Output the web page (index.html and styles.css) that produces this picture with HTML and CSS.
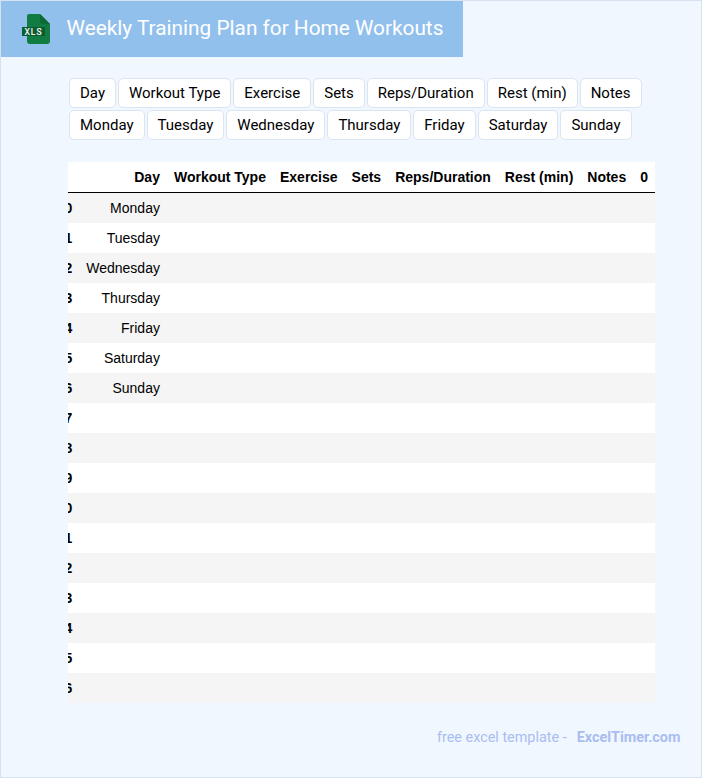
FILE: index.html
```html
<!DOCTYPE html>
<html lang="en">
<head>
<meta charset="utf-8">
<title>Weekly Training Plan for Home Workouts</title>
<link rel="stylesheet" href="styles.css">
</head>
<body>
<div class="page">
  <header class="banner">
    <svg class="logo" width="30" height="30" viewBox="0 0 30 30" aria-hidden="true">
      <path d="M5 2a2 2 0 0 1 2-2H18L28 10V27a3 3 0 0 1-3 3H8a3 3 0 0 1-3-3Z" fill="#107c41"/>
      <path d="M18 0L28 10H21a3 3 0 0 1-3-3Z" fill="#0c6a37"/>
      <rect x="0" y="13" width="23" height="9" fill="#0b5c30"/>
      <text x="11.5" y="20.5" text-anchor="middle" class="logo-text">XLS</text>
    </svg>
    <h1 class="title">Weekly Training Plan for Home Workouts</h1>
  </header>
  <main class="content">
    <div class="chips">
      <span class="chip">Day</span><span class="chip">Workout Type</span><span class="chip">Exercise</span><span class="chip">Sets</span><span class="chip">Reps/Duration</span><span class="chip">Rest (min)</span><span class="chip">Notes</span>
    </div>
    <div class="chips">
      <span class="chip">Monday</span><span class="chip">Tuesday</span><span class="chip">Wednesday</span><span class="chip">Thursday</span><span class="chip">Friday</span><span class="chip">Saturday</span><span class="chip">Sunday</span>
    </div>
    <div class="table-wrap">
      <table class="sheet">
        <thead>
          <tr><th></th><th>Day</th><th>Workout Type</th><th>Exercise</th><th>Sets</th><th>Reps/Duration</th><th>Rest (min)</th><th>Notes</th><th>0</th></tr>
        </thead>
        <tbody>
          <tr><th>0</th><td>Monday</td><td></td><td></td><td></td><td></td><td></td><td></td><td></td></tr>
          <tr><th>1</th><td>Tuesday</td><td></td><td></td><td></td><td></td><td></td><td></td><td></td></tr>
          <tr><th>2</th><td>Wednesday</td><td></td><td></td><td></td><td></td><td></td><td></td><td></td></tr>
          <tr><th>3</th><td>Thursday</td><td></td><td></td><td></td><td></td><td></td><td></td><td></td></tr>
          <tr><th>4</th><td>Friday</td><td></td><td></td><td></td><td></td><td></td><td></td><td></td></tr>
          <tr><th>5</th><td>Saturday</td><td></td><td></td><td></td><td></td><td></td><td></td><td></td></tr>
          <tr><th>6</th><td>Sunday</td><td></td><td></td><td></td><td></td><td></td><td></td><td></td></tr>
          <tr><th>7</th><td></td><td></td><td></td><td></td><td></td><td></td><td></td><td></td></tr>
          <tr><th>8</th><td></td><td></td><td></td><td></td><td></td><td></td><td></td><td></td></tr>
          <tr><th>9</th><td></td><td></td><td></td><td></td><td></td><td></td><td></td><td></td></tr>
          <tr><th>10</th><td></td><td></td><td></td><td></td><td></td><td></td><td></td><td></td></tr>
          <tr><th>11</th><td></td><td></td><td></td><td></td><td></td><td></td><td></td><td></td></tr>
          <tr><th>12</th><td></td><td></td><td></td><td></td><td></td><td></td><td></td><td></td></tr>
          <tr><th>13</th><td></td><td></td><td></td><td></td><td></td><td></td><td></td><td></td></tr>
          <tr><th>14</th><td></td><td></td><td></td><td></td><td></td><td></td><td></td><td></td></tr>
          <tr><th>15</th><td></td><td></td><td></td><td></td><td></td><td></td><td></td><td></td></tr>
          <tr><th>16</th><td></td><td></td><td></td><td></td><td></td><td></td><td></td><td></td></tr>
        </tbody>
      </table>
    </div>
  </main>
  <footer class="footer">
    <span class="footer-label">free excel template -</span>
    <span class="footer-brand">ExcelTimer.com</span>
  </footer>
</div>
</body>
</html>
```
FILE: styles.css
```css
* { box-sizing: border-box; }
html, body { margin: 0; padding: 0; }
body {
  font-family: Roboto, "Liberation Sans", sans-serif;
  background: #f0f7ff;
  color: #000;
}
.page {
  width: 702px;
  height: 778px;
  border: 1px solid #d6e2f0;
  background: #f0f7ff;
  overflow: hidden;
}
.banner {
  width: 462px;
  height: 56px;
  background: #92c0ed;
  display: flex;
  align-items: center;
  padding-left: 21px;
}
.logo { flex: none; margin-right: 14.5px; }
.logo-text { font: 400 8.5px Roboto, sans-serif; fill: #fff; letter-spacing: 1px; stroke: #fff; stroke-width: .2; }
.title {
  margin: 0 0 2px;
  font-size: 20.8px;
  font-weight: 400;
  color: #fff;
  white-space: nowrap;
}
.content { padding: 21px 46px 0 68px; }
.chips { display: flex; gap: 1.98px; margin-bottom: 2px; }
.chip {
  display: block;
  height: 30px;
  line-height: 28px;
  padding: 0 10px;
  background: #fff;
  border: 1px solid #dbe5f1;
  border-radius: 5px;
  font-size: 15px;
  white-space: nowrap;
}
.table-wrap {
  margin-top: 22px;
  margin-left: -1px;
  width: 587px;
  overflow: hidden;
  display: flex;
  justify-content: flex-end;
}
.sheet {
  flex: none;
  border-collapse: separate;
  border-spacing: 0;
  background: #fff;
  font-family: "Liberation Sans", Arial, sans-serif;
  font-size: 14px;
}
.sheet th, .sheet td {
  height: 30px;
  padding: 0 7px;
  text-align: right;
  white-space: nowrap;
}
.sheet th { font-weight: 700; }
.sheet thead th { height: 31px; border-bottom: 1px solid #000; }
.sheet tbody tr:nth-child(odd) { background: #f5f5f5; }
.footer {
  margin-top: 26px;
  padding-right: 20.6px;
  display: flex;
  justify-content: flex-end;
  gap: 10px;
  font-size: 14.4px;
  color: #aabdf0;
}
.footer-brand { font-weight: 700; }
```
